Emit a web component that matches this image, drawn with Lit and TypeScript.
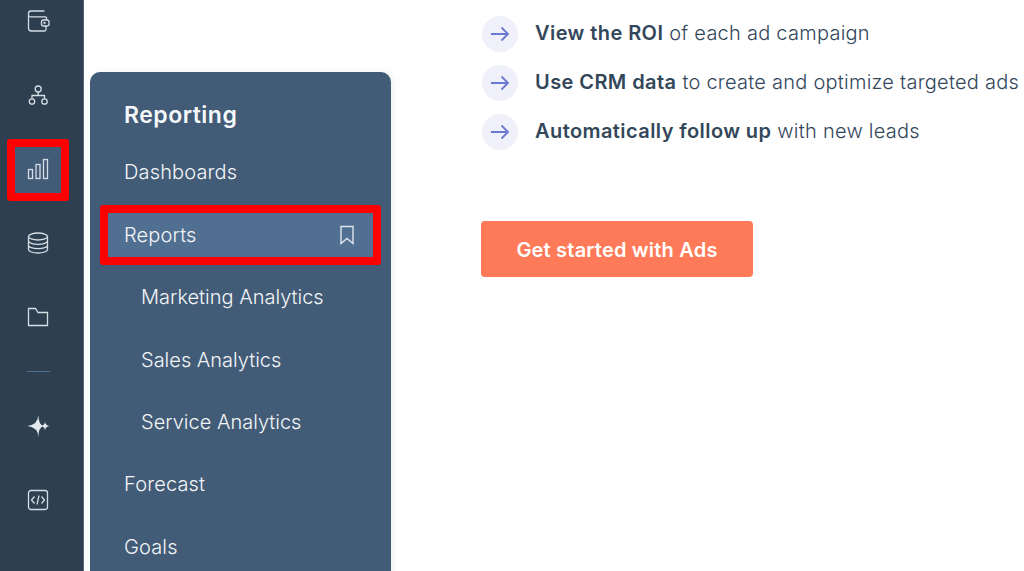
import { LitElement, html, css, svg } from "lit";
import { customElement } from "lit/decorators.js";

const railIcons = [
  svg`<path d="M2.500 6 V4.500 a2.500 2.500 0 0 1 2.500-2.500 H18.500 M2.500 6 v13 a3 3 0 0 0 3 3 h13 a1.500 1.500 0 0 0 1.500-1.500 V17 M2.500 6 a2 2 0 0 0 2 1.800 H19.500 a1 1 0 0 1 1 1 V11"/><rect x="15.500" y="11" width="7.500" height="6" rx="2"/><circle cx="18.500" cy="14" r=".5"/>`,
  svg`<circle cx="12.200" cy="6" r="3"/><circle cx="6" cy="18.500" r="2.700"/><circle cx="18.500" cy="18.500" r="2.700"/><path d="M12.200 9 V12.500 M6 15.800 V12.500 H18.500 V15.800"/>`,
  svg`<rect x="2.500" y="12.500" width="4" height="9"/><rect x="10" y="7.500" width="4" height="14"/><rect x="17.500" y="2.500" width="4" height="19"/>`,
  svg`<ellipse cx="12" cy="5.500" rx="9.500" ry="3.500"/><path d="M2.500 5.500 V18.500 C2.500 20.500 6.700 22 12 22 S21.500 20.500 21.500 18.500 V5.500 M2.500 9.800 C2.500 11.800 6.700 13.300 12 13.300 S21.500 11.800 21.500 9.800 M2.500 14.200 C2.500 16.200 6.700 17.700 12 17.700 S21.500 16.200 21.500 14.200"/>`,
  svg`<path d="M2.500 3.500 H9.500 L12 7.500 H21.500 V20.500 H2.500 Z"/>`,
  svg`<path class="fill" d="M12.300 1 Q12.500 10.500 17.500 12 Q12.500 13.500 12.300 23 Q12.100 13.500 1.500 12 Q12.100 10.500 12.300 1 Z"/><path class="fill" d="M19 7.500 Q19.200 11.200 23.500 12 Q19.200 12.800 19 16.500 Q18.800 12.800 15 12 Q18.800 11.200 19 7.500 Z"/>`,
  svg`<rect x="2.500" y="2.500" width="19" height="19" rx="2.500"/><path d="M8.500 8.500 L5.500 12 L8.500 15.500 M15.500 8.500 L18.500 12 L15.500 15.500 M13 7.500 L11 16.500"/>`,
];

@customElement("app-root")
export class AppRoot extends LitElement {
  static styles = css`
    :host { display: block; width: 1024px; height: 571px; overflow: hidden; background: #fff;
      font-family: "Inter", "Noto Sans", sans-serif; }
    .page { display: grid; grid-template-columns: 84px 306px 1fr; height: 571px; overflow: hidden; }
    .rail { background: #2e3f50; display: flex; flex-direction: column; align-items: center;
      height: 571px; overflow: hidden; border-right: 1px solid #51677f; box-sizing: border-box; }
    .slot { flex: none; height: 74px; width: 100%; display: flex; align-items: center; justify-content: center; margin-right: 7px; box-sizing: border-box; }
    .slot:first-child { height: 42px; }
    .slot:nth-child(2) { margin-top: 16px; }
    .slot svg { width: 24px; height: 24px; fill: none; stroke: #d5dde5; stroke-width: 1.300; }
    .slot svg .fill { fill: #e4e9ee; stroke: none; }
    .slot.hot { width: 62px; height: 62px; margin: 7px 7px 5px 0; border: 8px solid #fe0000; border-radius: 3px; background: #425b76; }
    .slot.hot svg { margin-bottom: 3px; }
    .rule { flex: none; width: 23px; height: 1px; background: #51708f; margin-right: 6px; }
    .rule-wrap { flex: none; height: 35px; display: flex; align-items: center; }
    .panel { margin: 72px 0 0 6px; width: 301px; box-sizing: border-box; background: #425b76; border-radius: 10px 10px 0 0;
      box-shadow: 2px 0 6px rgba(45,62,80,.08); color: #f2f5f8; padding-top: 27px; height: 520px; }
    .head { font-size: 23px; font-weight: 600; line-height: 32px; padding-left: 34px; color: #f5f8fa; margin-bottom: 10px; letter-spacing: .5px; }
    .item { height: 62.400px; display: flex; align-items: center; font-size: 20px; font-weight: 300; padding-left: 34px; box-sizing: border-box; letter-spacing: .15px; }
    .item.sub { padding-left: 51px; letter-spacing: 0; }
    .item.sel { margin: 2px 10px .7px 10px; height: 60px; padding: 0 18px 0 16px; border: 8px solid #fe0000; border-radius: 3px; background: #516f90; justify-content: space-between; }
    .item.sel svg { width: 16px; height: 20px; fill: none; stroke: #dfe5ec; stroke-width: 1.400; margin-left: -1px; }
    .main { padding: 16px 0 0 91px; color: #33475b; }
    .row { display: flex; align-items: center; height: 36px; gap: 17px; margin-bottom: 13px; white-space: nowrap; font-size: 20px; font-weight: 300; letter-spacing: .25px; }
    .row b { font-weight: 600; letter-spacing: .42px; }
    .copy { padding-bottom: 2px; }
    .dot { flex: none; width: 36px; height: 36px; margin-left: 1px; border-radius: 50%; background: #f0f0fa; display: flex; align-items: center; justify-content: center; }
    .dot svg { width: 20px; height: 16px; fill: none; stroke: #6a78d1; stroke-width: 1.800; }
    .cta { margin-top: 71px; width: 272px; height: 56px; padding-top: 1px; box-sizing: border-box; border-radius: 4px; background: #ff7a59; color: #fff; font-size: 20px; font-weight: 600;
      display: flex; align-items: center; justify-content: center; letter-spacing: .2px; }
  `;

  icon(i: number) {
    return html`<svg viewBox="0 0 24 24">${railIcons[i]}</svg>`;
  }

  row(bold: string, rest: string) {
    return html`<div class="row"><div class="dot"><svg viewBox="0 0 20 16"><path d="M1 8 H18 M11.500 1.500 L18 8 L11.500 14.500"/></svg></div><div class="copy"><b>${bold}</b> <span>${rest}</span></div></div>`;
  }

  render() {
    return html`<div class="page">
      <nav class="rail">
        <div class="slot">${this.icon(0)}</div>
        <div class="slot">${this.icon(1)}</div>
        <div class="slot hot">${this.icon(2)}</div>
        <div class="slot">${this.icon(3)}</div>
        <div class="slot">${this.icon(4)}</div>
        <div class="rule-wrap"><div class="rule"></div></div>
        <div class="slot">${this.icon(5)}</div>
        <div class="slot">${this.icon(6)}</div>
      </nav>
      <aside class="panel">
        <div class="head">Reporting</div>
        <div>
          <div class="item">Dashboards</div>
          <div class="item sel">Reports<svg viewBox="0 0 16 20"><path d="M2 1.500 H14 V18.500 L8 13.500 L2 18.500 Z"/></svg></div>
          <div class="item sub">Marketing Analytics</div>
          <div class="item sub">Sales Analytics</div>
          <div class="item sub">Service Analytics</div>
          <div class="item">Forecast</div>
          <div class="item">Goals</div>
        </div>
      </aside>
      <main class="main">
        ${this.row("View the ROI", "of each ad campaign")}
        ${this.row("Use CRM data", "to create and optimize targeted ads")}
        ${this.row("Automatically follow up", "with new leads")}
        <div class="cta">Get started with Ads</div>
      </main>
    </div>`;
  }
}
